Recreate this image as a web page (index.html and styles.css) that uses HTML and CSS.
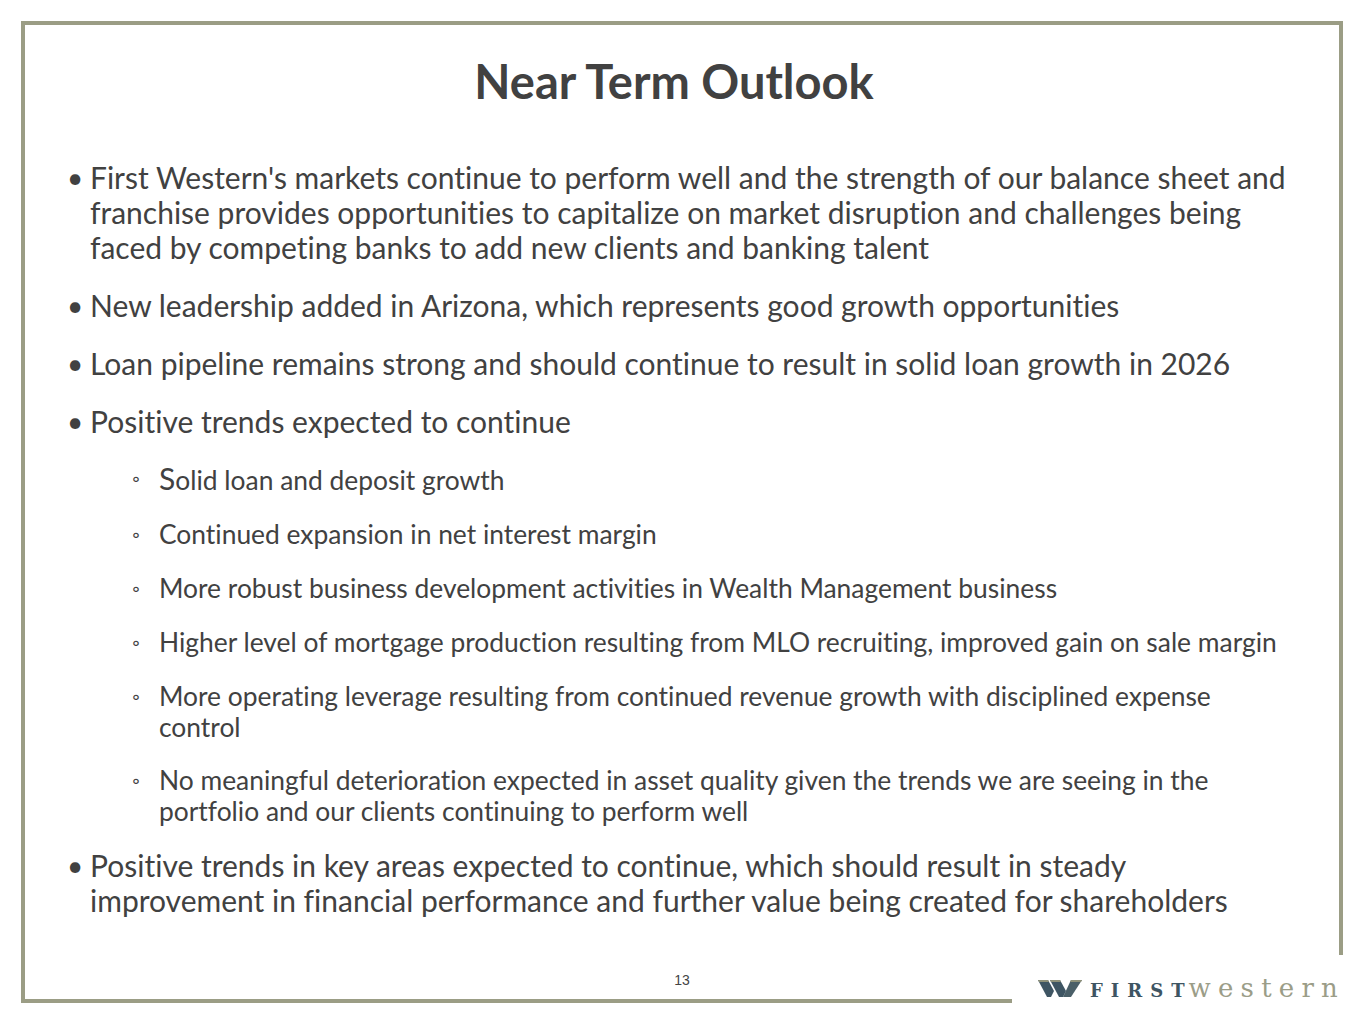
FILE: index.html
```html
<!DOCTYPE html>
<html lang="en">
<head>
<meta charset="utf-8">
<title>Near Term Outlook</title>
<link rel="stylesheet" href="styles.css">
</head>
<body>
<div class="slide">
  <h1 class="title">Near Term Outlook</h1>
  <ul class="points">
    <li>First Western's markets continue to perform well and the strength of our balance sheet and franchise provides opportunities to capitalize on market disruption and challenges being faced by competing banks to add new clients and banking talent</li>
    <li>New leadership added in Arizona, which represents good growth opportunities</li>
    <li>Loan pipeline remains strong and should continue to result in solid loan growth in 2026</li>
    <li>Positive trends expected to continue
      <ul class="subpoints">
        <li><span class="big">S</span>olid loan and deposit growth</li>
        <li>Continued expansion in net interest margin</li>
        <li>More robust business development activities in Wealth Management business</li>
        <li>Higher level of mortgage production resulting from MLO recruiting, improved gain on sale margin</li>
        <li>More operating leverage resulting from continued revenue growth with disciplined expense control</li>
        <li>No meaningful deterioration expected in asset quality given the trends we are seeing in the portfolio and our clients continuing to perform well</li>
      </ul>
    </li>
    <li>Positive trends in key areas expected to continue, which should result in steady improvement in financial performance and further value being created for shareholders</li>
  </ul>
  <div class="footer">
    <span class="page-num">13</span>
  </div>
  <div class="logo-area">
    <div class="logo">
      <svg class="logo-mark" width="44" height="17" viewBox="0 0 44 17" aria-hidden="true">
        <polygon points="0,0 10,0 16,11 13,17 9,17" fill="#3e5563"/>
        <polygon points="0,0 10,0 11,2 1,2" fill="#8e917a"/>
        <polygon points="12,0 22,0 28,11 25,17 21,17" fill="#3e5563"/>
        <polygon points="12,0 22,0 23,2 13,2" fill="#8e917a"/>
        <polygon points="25,17 33,0 44,0 33,17" fill="#4a5f68"/>
        <polygon points="33,0 44,0 43,2 32,2" fill="#8e917a"/>
      </svg>
      <span class="logo-first">FIRST</span><span class="logo-western">western</span>
    </div>
  </div>
</div>
</body>
</html>
```

FILE: styles.css
```css
html, body {
  margin: 0;
  padding: 0;
  background: #ffffff;
}

body {
  font-family: Lato, "Open Sans", "Liberation Sans", sans-serif;
  color: #414141;
}

.slide {
  position: relative;
  box-sizing: border-box;
  width: 1322px;
  height: 982px;
  margin: 21px 0 0 21px;
  border: 4px solid #9b9d85;
  display: flex;
  flex-direction: column;
}

.title {
  margin: 28px 0 0 0;
  padding-right: 16px;
  text-align: center;
  font-size: 47px;
  line-height: 56px;
  font-weight: 700;
  color: #414141;
}

.points {
  list-style: none;
  margin: 51px 0 0 0;
  padding: 0 40px 0 42px;
  font-size: 30px;
  line-height: 35px;
  font-variant-ligatures: none;
}

.points > li {
  display: flex;
  flex-wrap: wrap;
  margin-top: 23px;
  padding-left: 23px;
  position: relative;
}

.points > li:first-child {
  margin-top: 0;
}

.points > li:last-child {
  margin-top: 21px;
}

.points > li::before {
  content: "\2022";
  position: absolute;
  left: 0;
  top: 0;
  width: 23px;
  font-size: 28px;
}

.subpoints {
  list-style: none;
  margin: 24px 14px 0 0;
  padding: 0 0 0 43px;
  width: 100%;
  font-size: 26.4px;
  line-height: 31px;
}

.subpoints > li {
  position: relative;
  padding-left: 26px;
  margin-top: 23px;
}

.subpoints > li:first-child {
  margin-top: 0;
}

.subpoints > li:last-child {
  margin-top: 22px;
}

.subpoints > li::before {
  content: "\25E6";
  position: absolute;
  left: -1px;
  top: 0;
  font-size: 20px;
}

.big {
  font-size: 30px;
}

.footer {
  margin-top: auto;
  height: 28px;
  display: flex;
  justify-content: center;
  align-items: flex-start;
}

.page-num {
  font-family: "Liberation Sans", Arial, sans-serif;
  font-size: 14px;
  line-height: 18px;
  color: #444444;
}

.logo-area {
  position: absolute;
  right: -4px;
  bottom: -4px;
  width: 331px;
  height: 48px;
  background: #ffffff;
}

.logo {
  position: absolute;
  left: 26px;
  top: 18px;
  display: flex;
  align-items: baseline;
  white-space: nowrap;
}

.logo-mark {
  align-self: center;
  margin-right: 8px;
}

.logo-first {
  font-family: "DejaVu Serif", "Liberation Serif", serif;
  font-weight: 700;
  font-size: 18px;
  letter-spacing: 8px;
  color: #3e5563;
  margin-right: -4px;
}

.logo-western {
  font-family: "DejaVu Serif", "Liberation Serif", serif;
  font-size: 26px;
  letter-spacing: 7.2px;
  color: #9b9d88;
}
```
